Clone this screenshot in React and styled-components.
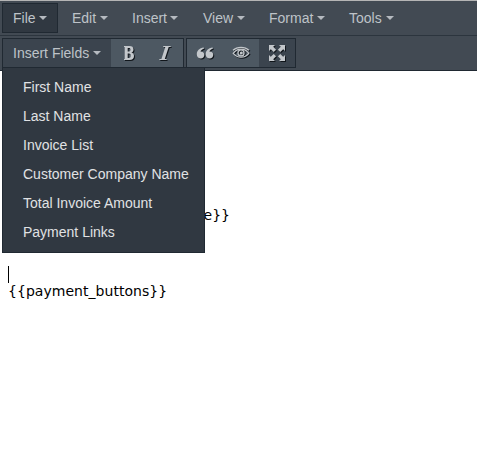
import React from "react";
import styled, { createGlobalStyle } from "styled-components";

const Global = createGlobalStyle`
  * { box-sizing: border-box; }
  html, body { margin: 0; background: #fff; overflow: hidden; }
`;

const Editor = styled.div`
  width: 477px;
  height: 475px;
  display: flex;
  flex-direction: column;
  border-top: 1px solid #b5b5b5;
  background: #fff;
  font-family: "Liberation Sans", Arial, sans-serif;
  font-size: 14px;
`;

const MenuBar = styled.nav`
  display: flex;
  flex: none;
  height: 35px;
  padding: 2px 2px 0;
  background: #424a53;
  border-bottom: 1px solid #2c353e;
`;

const MenuButton = styled.button`
  display: flex;
  align-items: center;
  flex: none;
  width: ${(p) => p.$width}px;
  height: 30px;
  margin: 0 3px 0 0;
  padding: 0 0 0 10px;
  border: 1px solid ${(p) => (p.$active ? "#202932" : "transparent")};
  background: ${(p) => (p.$active ? "#303841" : "transparent")};
  color: #bec3c8;
  font: inherit;
  line-height: 20px;
  white-space: nowrap;
`;

const Caret = styled.span`
  flex: none;
  margin: 0 0 1px ${(p) => p.$gap || 4}px;
  border: 4px solid transparent;
  border-top-color: #b5bac0;
  border-bottom: 0;
`;

const Toolbar = styled.div`
  display: flex;
  flex: none;
  gap: 2px;
  height: 35px;
  padding: 2px 2px 0;
  background: #424a53;
  border-bottom: 1px solid #202932;
`;

const Group = styled.div`
  position: relative;
  display: flex;
  height: 30px;
  border: 1px solid #202932;
`;

const FieldsButton = styled.button`
  display: flex;
  align-items: center;
  width: 108px;
  padding: 0 0 0 10px;
  border: 0;
  background: #3b444e;
  color: #bec3c8;
  font: inherit;
  white-space: nowrap;
`;

const ToolButton = styled.button`
  display: flex;
  align-items: center;
  justify-content: center;
  width: 36px;
  padding: 0;
  border: 0;
  background: ${(p) => (p.$dark ? "#3b444e" : "#4d5862")};
  svg { display: block; filter: drop-shadow(1px 1px 0 #11161b); }
`;

const Dropdown = styled.ul`
  position: absolute;
  z-index: 1;
  top: 28px;
  left: -1px;
  width: 203px;
  height: 186px;
  margin: 0;
  padding: 5px 0 0;
  list-style: none;
  background: #303841;
  border: 1px solid #202932;
`;

const Field = styled.li`
  height: 29px;
  padding-left: 20px;
  color: #e0e2e4;
  line-height: 29px;
  white-space: nowrap;
`;

const Content = styled.main`
  flex: 1;
  padding: 136px 8px 0;
  color: #000;
  font-family: "DejaVu Sans", Verdana, sans-serif;
  font-size: 14px;
  line-height: 17px;
`;

const Line = styled.div`
  height: 17px;
  white-space: nowrap;
  letter-spacing: 0.04px;
  padding-left: ${(p) => p.$indent || 0}px;
`;

const CursorLine = styled.div`
  width: 1px;
  height: 17px;
  margin-top: 42px;
  background: #000;
`;

const menus = [
  { label: "File", width: 56, gap: 3, active: true },
  { label: "Edit", width: 57 },
  { label: "Insert", width: 68, gap: 3 },
  { label: "View", width: 63 },
  { label: "Format", width: 77 },
  { label: "Tools", width: 68 },
];

const fields = [
  "First Name",
  "Last Name",
  "Invoice List",
  "Customer Company Name",
  "Total Invoice Amount",
  "Payment Links",
];

const ink = "#c3c7cb";

const BoldIcon = () => (
  <svg width="18" height="18" viewBox="0 0 18 18">
    <path fill={ink} fillRule="evenodd" d="M4 2h5.300c2.700 0 4.200 1.200 4.200 3.400 0 1.600-.8 2.700-2.200 3.100 1.800.5 2.700 1.600 2.700 3.400 0 2.600-1.700 4.100-4.600 4.100H4v-1h.7V3H4zm3.700 2v3.600h1.100c1.100 0 1.700-.6 1.700-1.800S9.900 4 8.800 4zm0 5.600V14h1.300c1.100 0 1.700-.8 1.700-2.200 0-1.500-.6-2.200-1.800-2.200z" />
  </svg>
);

const ItalicIcon = () => (
  <svg width="18" height="18" viewBox="0 0 18 18">
    <path fill={ink} d="M7.400 2h7.400l-.3 1h-1.800L8.800 15h1.900l-.3 1H3.200l.3-1h1.900L9.300 3H7.100z" />
  </svg>
);

const QuoteIcon = () => (
  <svg width="18" height="18" viewBox="0 0 18 18">
    <path fill={ink} d="M7.800 3.600v1.100C6 5.400 4.900 6.400 4.400 7.600c2.300-.2 4 1.100 4 3.200 0 2.200-1.600 3.700-3.700 3.700C2.300 14.500.8 12.700.8 10.200c0-3.400 2.500-5.900 7-6.600zM16.700 3.600v1.100c-1.800.7-2.900 1.700-3.400 2.900 2.300-.2 4 1.100 4 3.200 0 2.200-1.600 3.700-3.700 3.700-2.400 0-3.900-1.800-3.900-4.300 0-3.400 2.500-5.900 7-6.600z" />
  </svg>
);

const EyeIcon = () => (
  <svg width="18" height="18" viewBox="0 0 18 18" fill="none" stroke={ink}>
    <path strokeWidth="1.200" d="M1.200 9.300C3.200 6.700 5.800 5.200 9 5.200s5.800 1.500 7.800 4.100c-2 2.500-4.600 3.900-7.800 3.900s-5.800-1.400-7.800-3.900z" />
    <path strokeWidth="1.200" d="M1 6.300C3.200 4.200 5.700 3.300 9 3.300s5.800.9 8 3" />
    <circle cx="9" cy="8.900" r="3" strokeWidth="1.300" />
    <circle cx="9.300" cy="9" r="1.500" fill={ink} stroke="none" />
  </svg>
);

const FullscreenIcon = () => (
  <svg width="18" height="18" viewBox="0 0 18 18">
    <g fill={ink}>
      <path d="M1 1h6L5.200 2.800l2.900 2.900-2.400 2.400-2.900-2.900L1 7z" />
      <path d="M17 1v6l-1.800-1.800-2.900 2.900-2.400-2.400 2.900-2.900L11 1z" />
      <path d="M17 17h-6l1.800-1.800-2.900-2.900 2.400-2.400 2.900 2.900L17 11z" />
      <path d="M1 17v-6l1.800 1.800 2.900-2.900 2.400 2.400-2.900 2.900L7 17z" />
    </g>
  </svg>
);

export default function App() {
  return (
    <>
      <Global />
      <Editor>
        <MenuBar>
          {menus.map((m) => (
            <MenuButton key={m.label} $width={m.width} $active={m.active}>
              {m.label}
              <Caret $gap={m.gap} />
            </MenuButton>
          ))}
        </MenuBar>
        <Toolbar>
          <Group>
            <FieldsButton>
              Insert Fields
              <Caret />
            </FieldsButton>
            <ToolButton aria-label="Bold"><BoldIcon /></ToolButton>
            <ToolButton aria-label="Italic"><ItalicIcon /></ToolButton>
            <Dropdown>
              {fields.map((f) => (
                <Field key={f}>{f}</Field>
              ))}
            </Dropdown>
          </Group>
          <Group>
            <ToolButton aria-label="Blockquote"><QuoteIcon /></ToolButton>
            <ToolButton aria-label="Preview"><EyeIcon /></ToolButton>
            <ToolButton aria-label="Fullscreen" $dark><FullscreenIcon /></ToolButton>
          </Group>
        </Toolbar>
        <Content>
          <Line $indent={195.5}>{"e}}"}</Line>
          <CursorLine />
          <Line>{"{{payment_buttons}}"}</Line>
        </Content>
      </Editor>
    </>
  );
}
